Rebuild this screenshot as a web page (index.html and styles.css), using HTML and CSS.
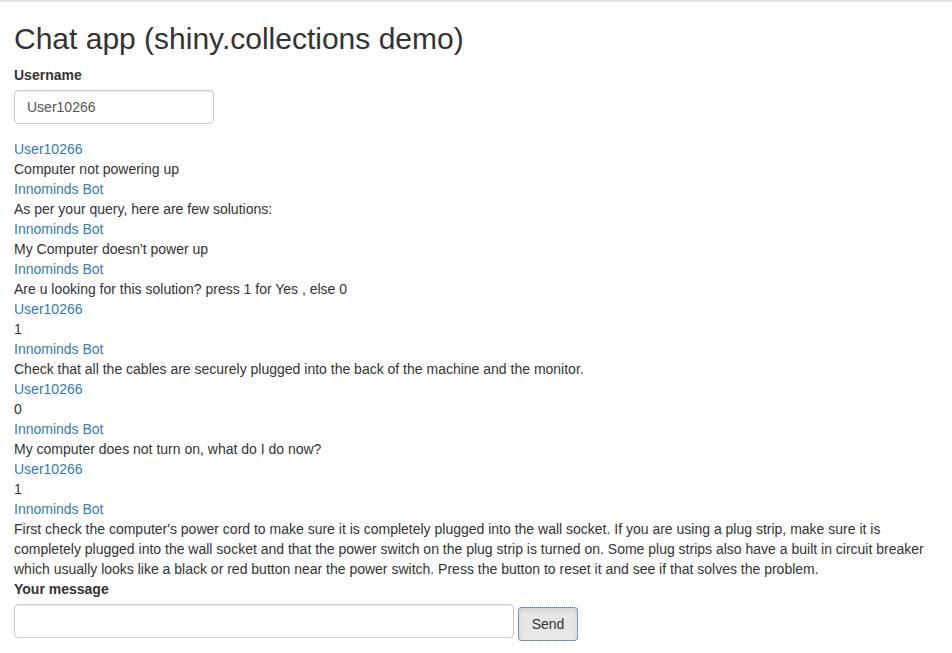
FILE: index.html
```html
<!DOCTYPE html>
<html>
<head>
<meta charset="utf-8">
<title>Chat app</title>
<link rel="stylesheet" href="styles.css">
</head>
<body>
<div class="topline"></div>
<div class="container">
  <h2 class="title">Chat app (shiny.collections demo)</h2>
  <div class="form-group">
    <label class="label" for="username">Username</label>
    <input class="text-input user-input" id="username" type="text" value="User10266">
  </div>
  <div class="chat">
    <div class="author">User10266</div>
    <div class="msg">Computer not powering up</div>
    <div class="author">Innominds Bot</div>
    <div class="msg">As per your query, here are few solutions:</div>
    <div class="author">Innominds Bot</div>
    <div class="msg">My Computer doesn't power up</div>
    <div class="author">Innominds Bot</div>
    <div class="msg">Are u looking for this solution? press 1 for Yes , else 0</div>
    <div class="author">User10266</div>
    <div class="msg">1</div>
    <div class="author">Innominds Bot</div>
    <div class="msg">Check that all the cables are securely plugged into the back of the machine and the monitor.</div>
    <div class="author">User10266</div>
    <div class="msg">0</div>
    <div class="author">Innominds Bot</div>
    <div class="msg">My computer does not turn on, what do I do now?</div>
    <div class="author">User10266</div>
    <div class="msg">1</div>
    <div class="author">Innominds Bot</div>
    <div class="msg">First check the computer's power cord to make sure it is completely plugged into the wall socket. If you are using a plug strip, make sure it is completely plugged into the wall socket and that the power switch on the plug strip is turned on. Some plug strips also have a built in circuit breaker which usually looks like a black or red button near the power switch. Press the button to reset it and see if that solves the problem.</div>
  </div>
  <div class="form-group">
    <label class="label" for="message">Your message</label>
    <div class="send-row">
      <input class="text-input msg-input" id="message" type="text">
      <button class="btn" type="button">Send</button>
    </div>
  </div>
</div>
</body>
</html>
```
FILE: styles.css
```css
html, body {
  margin: 0;
  padding: 0;
  background: #fff;
}
body {
  font-family: "Liberation Sans", Arial, sans-serif;
  font-size: 14px;
  line-height: 20px;
  color: #333;
}
.topline {
  height: 2px;
  background: #dfe3e8;
}
.container {
  padding: 0 14px;
}
.title {
  font-size: 30px;
  font-weight: 400;
  line-height: 33px;
  margin: 20px 0 10px;
  color: #333;
}
.form-group {
  margin-bottom: 15px;
}
.label {
  display: block;
  font-weight: 700;
  margin-bottom: 5px;
}
.text-input {
  display: block;
  box-sizing: border-box;
  height: 34px;
  padding: 6px 12px;
  font-family: inherit;
  font-size: 14px;
  line-height: 20px;
  color: #555;
  background: #fff;
  border: 1px solid #ccc;
  border-radius: 4px;
  box-shadow: inset 0 1px 1px rgba(0,0,0,.075);
}
.user-input {
  width: 200px;
}
.send-row {
  display: flex;
  align-items: flex-start;
  gap: 4px;
}
.msg-input {
  width: 500px;
}
.btn {
  margin-top: 3px;
  box-sizing: border-box;
  height: 34px;
  width: 60px;
  padding: 6px 12px;
  font-family: inherit;
  font-size: 14px;
  line-height: 20px;
  color: #333;
  background: #e6e6e6;
  border: 1px solid #adadad;
  border-radius: 4px;
  outline: 1px dotted #3a7bd5;
  outline-offset: -1px;
  box-shadow: inset 0 3px 5px rgba(0,0,0,.08);
}
.author {
  color: #337ab7;
}
.msg {
  color: #333;
}
```
